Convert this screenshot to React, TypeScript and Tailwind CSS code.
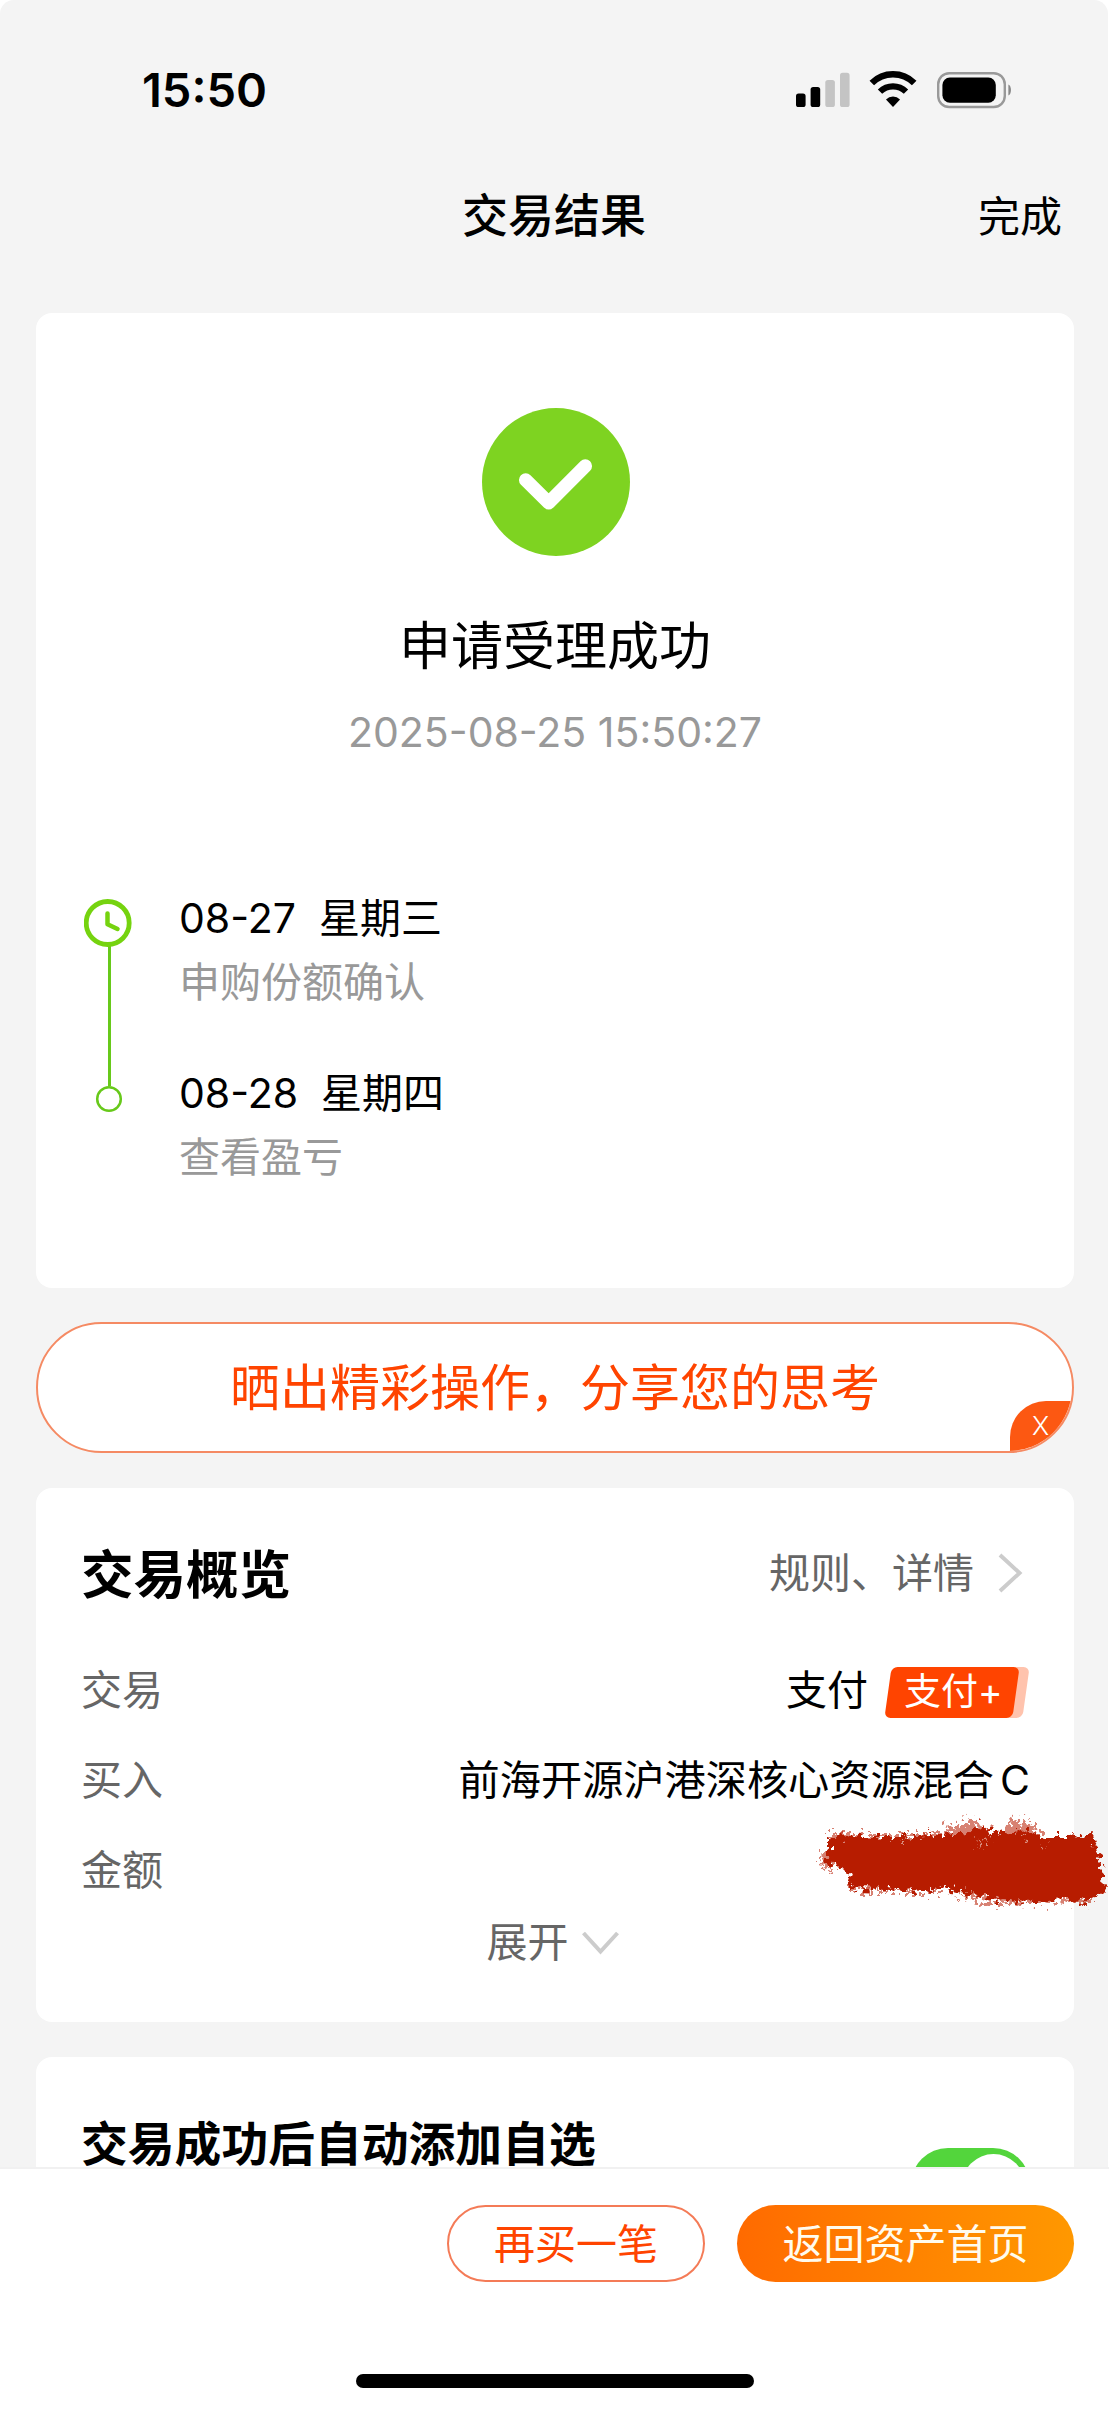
import React from "react";

const steps = [
  { date: "08-27", day: "星期三", text: "申购份额确认" },
  { date: "08-28", day: "星期四", text: "查看盈亏" },
];

function StatusIcons() {
  return (
    <svg width="218" height="38" viewBox="0 0 218 38" fill="none">
      <rect x="1" y="22.5" width="9.6" height="13.5" rx="2.6" fill="#000" />
      <rect x="15.6" y="16" width="9.6" height="20" rx="2.6" fill="#000" />
      <rect x="30.3" y="9" width="9.6" height="27" rx="2.6" fill="#c4c4c4" />
      <rect x="45" y="1.8" width="9.6" height="34.2" rx="2.6" fill="#c4c4c4" />
      <path d="M76.8 12a30 30 0 0 1 42.4 0" stroke="#000" strokeWidth="6.4" />
      <path d="M85 20.6a18.6 18.6 0 0 1 26 0" stroke="#000" strokeWidth="6.2" />
      <path d="M91 28.4a10 10 0 0 1 14 0L98 36z" fill="#000" />
      <rect x="143.2" y="2.2" width="66.6" height="33.8" rx="11" stroke="#999" strokeWidth="2.4" />
      <rect x="147.4" y="6.6" width="53.4" height="25.2" rx="7.5" fill="#000" />
      <path d="M213.4 13.4c3.4 1.4 3.4 9.6 0 11z" fill="#888" />
    </svg>
  );
}

function StepRail() {
  return (
    <svg className="ml-12 mt-1.5 shrink-0" width="48" height="216" viewBox="0 0 48 216" fill="none">
      <path d="M25.5 47v140" stroke="#67c91a" strokeWidth="3" />
      <circle cx="23.7" cy="24" r="21.5" stroke="#75d30f" strokeWidth="4.8" />
      <path d="M23.5 14.5v10.7l10 4.8" stroke="#75d30f" strokeWidth="4.5" strokeLinecap="round" strokeLinejoin="round" />
      <circle cx="25" cy="200" r="11.8" stroke="#67c91a" strokeWidth="2.5" />
    </svg>
  );
}

// brush stroke laid over the amount
function Scribble() {
  return (
    <svg className="absolute -right-[80px] -top-[42px]" width="309" height="120" viewBox="0 0 309 120">
      <defs>
        <filter id="rough" x="-5%" y="-15%" width="110%" height="130%">
          <feTurbulence type="fractalNoise" baseFrequency="0.16" numOctaves="3" seed="4" result="n" />
          <feDisplacementMap in="SourceGraphic" in2="n" scale="18" xChannelSelector="R" yChannelSelector="G" />
          <feGaussianBlur stdDeviation="0.6" />
        </filter>
        <filter id="grain" x="-10%" y="-20%" width="120%" height="140%">
          <feTurbulence type="fractalNoise" baseFrequency="0.22" numOctaves="2" seed="9" result="n" />
          <feDisplacementMap in="SourceGraphic" in2="n" scale="28" xChannelSelector="R" yChannelSelector="G" />
          <feGaussianBlur stdDeviation="0.6" />
        </filter>
      </defs>
      <g fill="#b71a00" filter="url(#grain)" opacity="0.55">
        <path d="M20 50l12 0 0 18-10-4z" />
        <path d="M146 22l10 4 12-11 14 10 2 14-40-2z" />
        <path d="M206 20l14-4 16 10 8 14-42-2z" />
        <path d="M30 32h114v6H30zM48 84h90v5H48zM150 90h140v8l-100 2z" />
      </g>
      <path
        fill="#b71a00"
        filter="url(#rough)"
        d="M29 33L60 34 100 34 144 31 168 30 176 23 186 26 200 30 226 26 238 34 264 34 292 32 298 52 303 70 304 87 290 98 262 97 234 99 200 98 180 92 150 89 146 82 140 84 128 88 94 87 50 86 46 68 28 62 22 56 29 48z"
      />
      <g fill="#d98c7c" filter="url(#grain)">
        <circle cx="184" cy="38" r="2.5" />
        <circle cx="178" cy="42" r="1.6" />
        <circle cx="222" cy="32" r="2.4" />
        <circle cx="242" cy="44" r="1.5" />
        <circle cx="104" cy="36" r="1.4" />
        <circle cx="166" cy="88" r="1.8" />
      </g>
    </svg>
  );
}

export default function App() {
  return (
    <div className="h-[2410px] w-[1109px] overflow-hidden bg-white font-['Inter','Noto_Sans_CJK_SC',sans-serif] text-[41px] leading-[50px] text-black">
      <div className="flex h-[2167px] w-[1108px] flex-col overflow-hidden rounded-t-[14px] bg-[#f4f4f4]">
        <div className="mt-14 flex h-[68px] shrink-0 items-center justify-between pl-[142px] pr-[95px]">
          <span className="text-[47px] font-semibold">15:50</span>
          <StatusIcons />
        </div>

        <header className="mb-[7px] grid h-[182px] shrink-0 grid-cols-3 items-center px-[46px]">
          <h1 className="col-start-2 text-center text-[46px] font-medium">交易结果</h1>
          <span className="pt-1 text-right text-[42px]">完成</span>
        </header>

        <main className="ml-9 w-[1038px]">
          <section className="h-[975px] rounded-2xl bg-white pt-[95px]">
            <svg className="ml-[446px]" width="148" height="148" viewBox="0 0 148 148" fill="none">
              <circle cx="74" cy="74" r="74" fill="#7ed321" />
              <path d="M43.7 72l23 22.8L103.3 58" stroke="#fff" strokeWidth="13.5" strokeLinecap="round" strokeLinejoin="round" />
            </svg>
            <h2 className="mt-[51px] text-center text-[52px] leading-[80px]">申请受理成功</h2>
            <p className="mt-5 text-center text-[41px] text-[#999]">2025-08-25 15:50:27</p>

            <div className="mt-[136px] flex">
              <StepRail />
              <div className="ml-[47px] flex flex-col gap-[61px]">
                {steps.map((step) => (
                  <div key={step.date}>
                    <div className="flex gap-[23px]">
                      <span>{step.date}</span>
                      <span>{step.day}</span>
                    </div>
                    <p className="mt-3.5 text-[#999]">{step.text}</p>
                  </div>
                ))}
              </div>
            </div>
          </section>

          <div className="relative mt-[34px] flex h-[131px] items-center justify-center overflow-hidden rounded-full border-2 border-[#f58a63] bg-white text-[50px] text-[#ff4400]">
            晒出精彩操作，分享您的思考
            <span className="absolute bottom-0 right-0 h-[50px] w-[62px] rounded-tl-[36px] bg-[#fc5812] pl-[22px] pt-0.5 text-[26px] font-light leading-[46px] text-white">
              X
            </span>
          </div>

          <section className="mt-[35px] h-[534px] rounded-2xl bg-white pl-[45px] pr-11 pt-[60px]">
            <div className="flex items-center justify-between">
              <h3 className="pt-1 text-[52.5px] font-bold leading-[46px]">交易概览</h3>
              <div className="flex items-center text-[#666]">
                规则、详情
                <svg className="ml-6 mr-[7px]" width="25" height="40" viewBox="0 0 25 40" fill="none">
                  <path d="M2 2l19.5 18L2 38" stroke="#ccc" strokeWidth="4" />
                </svg>
              </div>
            </div>
            <div className="mt-[67px] flex flex-col gap-10">
              <div className="flex items-center justify-between">
                <span className="text-[#666]">交易</span>
                <div className="flex h-[50px] items-center">
                  支付
                  <div className="relative ml-4 mt-1 h-[51px] w-[146px]">
                    <div className="absolute left-5 top-0 h-full w-[122px] -skew-x-[8deg] rounded-md bg-[#ffc3ad]" />
                    <div className="absolute left-1 top-0 h-full w-[128px] -skew-x-[8deg] rounded-md bg-[#ff4400]" />
                    <span className="absolute left-5 top-0 text-[37px] text-white">支付+</span>
                  </div>
                </div>
              </div>
              <div className="flex items-center justify-between">
                <span className="text-[#666]">买入</span>
                <div className="flex gap-1.5">
                  <span className="text-[41.2px]">前海开源沪港深核心资源混合</span>
                  <span>C</span>
                </div>
              </div>
              <div className="relative">
                <span className="text-[#666]">金额</span>
                <Scribble />
              </div>
            </div>
            <div className="mt-[22px] flex items-center justify-center pr-1.5 text-[#666]">
              展开
              <svg className="ml-[13px] mt-0.5" width="37" height="24" viewBox="0 0 37 24" fill="none">
                <path d="M1.5 2L18.5 20.5 35.5 2" stroke="#ccc" strokeWidth="4" />
              </svg>
            </div>
          </section>

          <section className="mt-[35px] flex h-[200px] justify-between rounded-t-2xl bg-white pl-[45px] pr-11">
            <h3 className="mt-16 text-[46.8px] font-bold leading-[46px]">交易成功后自动添加自选</h3>
            <div className="mt-[91px] flex h-[74px] w-[119px] justify-end rounded-full bg-[#53d53c] p-[5.5px]">
              <div className="size-[63px] rounded-full bg-white" />
            </div>
          </section>
        </main>
      </div>

      <footer className="h-[243px] border-t-2 border-[#f1f1f1] bg-white pt-9">
        <div className="flex justify-end gap-8 pr-[35px]">
          <button className="h-[77px] w-[258px] rounded-full border-2 border-[#f47b57] text-[#ff4400]">再买一笔</button>
          <button className="h-[77px] w-[337px] rounded-full bg-linear-to-r from-[#ff6a00] to-[#ff9800] text-[#fffbee]">返回资产首页</button>
        </div>
        <div className="mx-auto mt-[92px] h-3.5 w-[398px] rounded-full bg-black" />
      </footer>
    </div>
  );
}
